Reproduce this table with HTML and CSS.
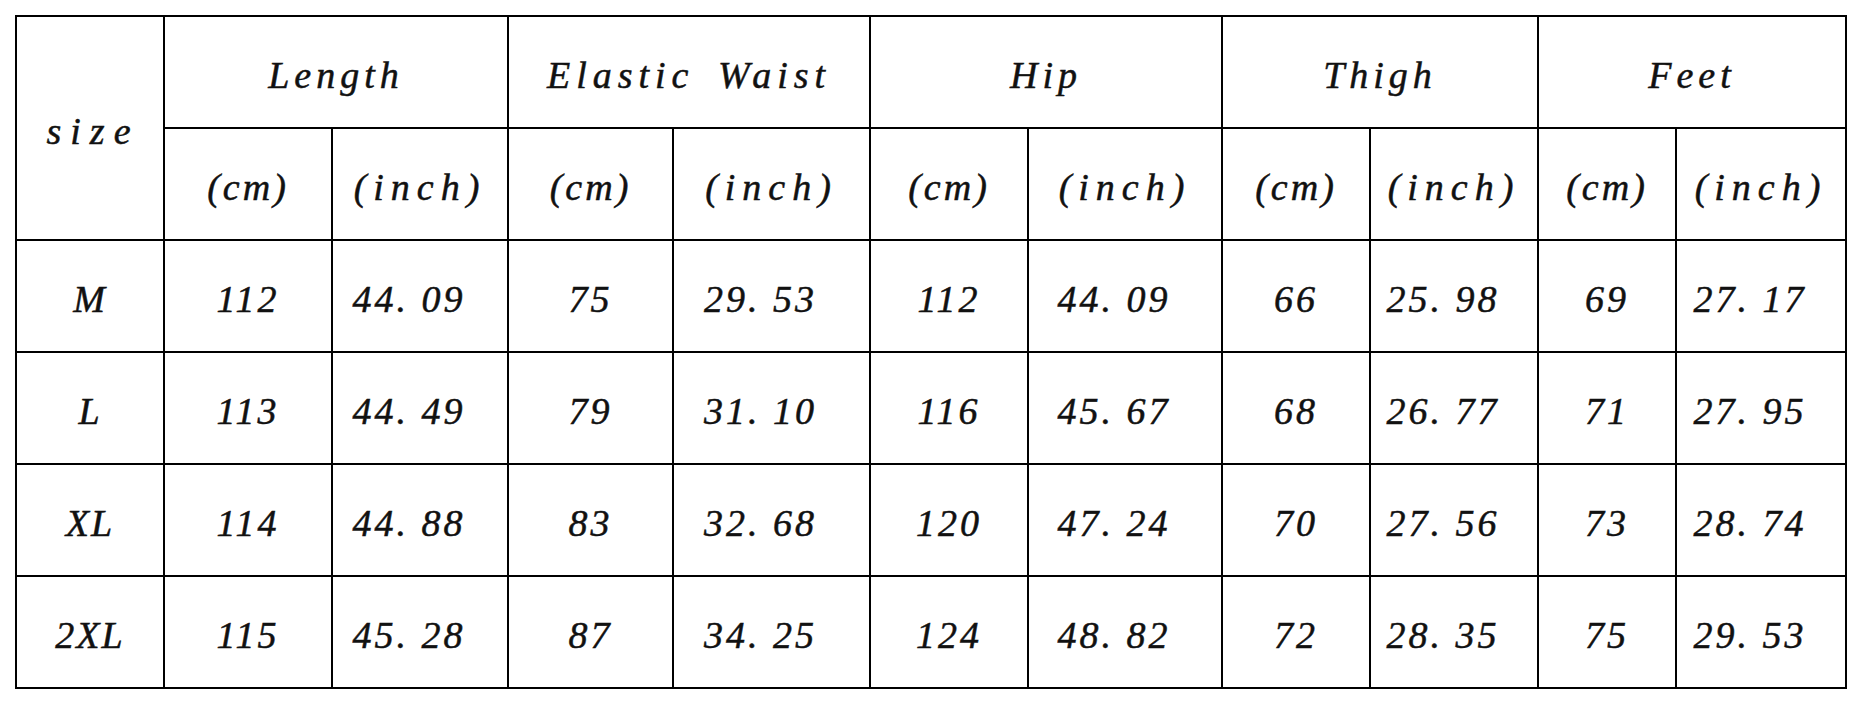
FILE: index.html
```html
<!DOCTYPE html>
<html lang="en">
<head>
<meta charset="utf-8">
<title>Size chart</title>
<link rel="stylesheet" href="styles.css">
</head>
<body>
<div class="chart">
  <div class="cell head size">size</div>
  <div class="cell head group">Length</div>
  <div class="cell head group wide">Elastic Waist</div>
  <div class="cell head group">Hip</div>
  <div class="cell head group">Thigh</div>
  <div class="cell head group">Feet</div>

  <div class="cell unit cm">(cm)</div><div class="cell unit inch">(inch)</div>
  <div class="cell unit cm">(cm)</div><div class="cell unit inch">(inch)</div>
  <div class="cell unit cm">(cm)</div><div class="cell unit inch">(inch)</div>
  <div class="cell unit cm">(cm)</div><div class="cell unit inch">(inch)</div>
  <div class="cell unit cm">(cm)</div><div class="cell unit inch">(inch)</div>

  <div class="cell label">M</div>
  <div class="cell num">112</div><div class="cell num in">44. 09</div>
  <div class="cell num">75</div><div class="cell num in">29. 53</div>
  <div class="cell num">112</div><div class="cell num in">44. 09</div>
  <div class="cell num">66</div><div class="cell num in">25. 98</div>
  <div class="cell num">69</div><div class="cell num in">27. 17</div>

  <div class="cell label">L</div>
  <div class="cell num">113</div><div class="cell num in">44. 49</div>
  <div class="cell num">79</div><div class="cell num in">31. 10</div>
  <div class="cell num">116</div><div class="cell num in">45. 67</div>
  <div class="cell num">68</div><div class="cell num in">26. 77</div>
  <div class="cell num">71</div><div class="cell num in">27. 95</div>

  <div class="cell label">XL</div>
  <div class="cell num">114</div><div class="cell num in">44. 88</div>
  <div class="cell num">83</div><div class="cell num in">32. 68</div>
  <div class="cell num">120</div><div class="cell num in">47. 24</div>
  <div class="cell num">70</div><div class="cell num in">27. 56</div>
  <div class="cell num">73</div><div class="cell num in">28. 74</div>

  <div class="cell label">2XL</div>
  <div class="cell num">115</div><div class="cell num in">45. 28</div>
  <div class="cell num">87</div><div class="cell num in">34. 25</div>
  <div class="cell num">124</div><div class="cell num in">48. 82</div>
  <div class="cell num">72</div><div class="cell num in">28. 35</div>
  <div class="cell num">75</div><div class="cell num in">29. 53</div>
</div>
</body>
</html>
```
FILE: styles.css
```css
html, body {
  margin: 0;
  padding: 0;
  background: #ffffff;
}

body {
  padding: 15px 0 0 15px;
  font-family: "Liberation Serif", "Times New Roman", serif;
  font-style: italic;
  color: #111111;
}

.chart {
  display: grid;
  width: max-content;
  grid-template-columns: 148px 168px 176px 165px 197px 158px 194px 148px 168px 138px 170px;
  grid-template-rows: repeat(6, 112px);
  border-left: 2px solid #000;
  border-top: 2px solid #000;
}

.cell {
  box-sizing: border-box;
  border-right: 2px solid #000;
  border-bottom: 2px solid #000;
  display: flex;
  align-items: center;
  justify-content: center;
  padding-top: 6px;
  font-family: "Liberation Serif", "Times New Roman", serif;
  font-style: italic;
  font-size: 38px;
  white-space: pre;
  -webkit-text-stroke: 0.5px #111111;
}

.head {
  letter-spacing: 5px;
}

.size {
  grid-row: span 2;
  letter-spacing: 9px;
  padding-left: 6px;
}

.group {
  grid-column: span 2;
}

.wide {
  letter-spacing: 6px;
  word-spacing: 8px;
}

.unit.cm {
  letter-spacing: 3px;
}

.unit.inch {
  letter-spacing: 7px;
}

.label {
  letter-spacing: 2px;
}

.num {
  letter-spacing: 3px;
}

.num.in {
  padding-right: 22px;
}
```
